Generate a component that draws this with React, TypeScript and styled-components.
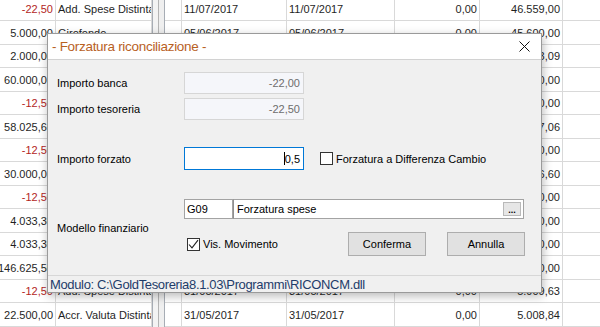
import React from 'react';
import styled, { createGlobalStyle } from 'styled-components';

const GlobalStyle = createGlobalStyle`
  html,
  body {
    margin: 0;
    padding: 0;
    background: #ffffff;
  }
`;

const Page = styled.div`
  position: relative;
  width: 600px;
  height: 327px;
  overflow: hidden;
  background: #ffffff;
  font-family: 'Liberation Sans', Arial, sans-serif;
  color: #1a1a1a;
`;

/* background grid */

const Grid = styled.div`
  margin-top: -2px;
`;

const GridRow = styled.div<{ $h: number }>`
  display: grid;
  grid-template-columns: 56px 96px 13px 17px 105px 108px 85px 83px 1fr;
  height: ${(p) => p.$h}px;
`;

const Cell = styled.div<{ $right?: boolean; $neg?: boolean; $last?: boolean }>`
  box-sizing: border-box;
  display: flex;
  align-items: center;
  justify-content: ${(p) => (p.$right ? 'flex-end' : 'flex-start')};
  padding: 0 ${(p) => (p.$right ? '2px' : '3px')} 0 ${(p) => (p.$right ? '0' : '2px')};
  border-bottom: 1px solid #d9d9d9;
  border-right: ${(p) => (p.$last ? 'none' : '1px solid #d9d9d9')};
  font-size: 11px;
  white-space: nowrap;
  overflow: hidden;
  color: ${(p) => (p.$neg ? '#b3261e' : '#1f1f1f')};
`;

const Splitter = styled.div`
  box-sizing: border-box;
  border-left: 1px solid #a7adb5;
  border-right: 1px solid #a7adb5;
  background: linear-gradient(
    to right,
    #f3f3f3 0 5px,
    #b4b4b4 5px 6px,
    #efefef 6px
  );
`;

/* dialog */

const Dialog = styled.div`
  position: absolute;
  left: 47px;
  top: 33px;
  width: 495px;
  height: 260px;
  box-sizing: border-box;
  display: flex;
  flex-direction: column;
  background: #f0f0f0;
  border: 1px solid #9a9a9a;
  box-shadow: 1px 3px 9px rgba(0, 0, 0, 0.28);
`;

const TitleBar = styled.div`
  display: flex;
  align-items: center;
  justify-content: space-between;
  height: 25px;
  background: #ffffff;
  border-bottom: 1px solid #d2d2d2;
  padding-left: 4px;
`;

const Title = styled.span`
  font-size: 13.5px;
  letter-spacing: -0.3px;
  color: #b8611f;
`;

const CloseButton = styled.span`
  display: flex;
  align-items: center;
  justify-content: center;
  width: 33px;
  height: 25px;
`;

const Body = styled.div`
  flex: 1;
  display: flex;
  flex-direction: column;
  padding: 12px 17px 0 9px;
  font-size: 11px;
  color: #000000;
`;

const Field = styled.div<{ $top: number }>`
  display: flex;
  align-items: center;
  margin-top: ${(p) => p.$top}px;
`;

const Label = styled.span`
  width: 127px;
  flex-shrink: 0;
`;

const AmountBox = styled.div<{ $active?: boolean; $h: number }>`
  box-sizing: border-box;
  width: 120px;
  height: ${(p) => p.$h}px;
  display: flex;
  align-items: center;
  justify-content: flex-end;
  padding-right: 3px;
  background: ${(p) => (p.$active ? '#ffffff' : '#f5f6fa')};
  border: 1px solid ${(p) => (p.$active ? '#0078d7' : '#d6d6d6')};
  color: ${(p) => (p.$active ? '#000000' : '#6d6d6d')};
`;

const Caret = styled.span`
  display: inline-block;
  width: 1px;
  height: 13px;
  background: #000000;
`;

const CheckRow = styled.label<{ $left: number }>`
  display: flex;
  align-items: center;
  gap: 3px;
  margin-left: ${(p) => p.$left}px;
`;

const Box = styled.span`
  box-sizing: border-box;
  width: 13px;
  height: 13px;
  display: flex;
  align-items: center;
  justify-content: center;
  background: #ffffff;
  border: 1px solid #333333;
`;

const Group = styled.div`
  display: flex;
  align-items: center;
  margin-top: 29px;
`;

const GroupColumn = styled.div`
  flex: 1;
  display: flex;
  flex-direction: column;
`;

const Lookup = styled.div`
  display: flex;
  height: 20px;
`;

const CodeBox = styled.div`
  box-sizing: border-box;
  width: 49px;
  display: flex;
  align-items: center;
  padding-left: 2px;
  background: #ffffff;
  border: 1px solid #a3a3a3;
`;

const DescBox = styled.div`
  box-sizing: border-box;
  flex: 1;
  display: flex;
  align-items: center;
  justify-content: space-between;
  padding: 0 2px 0 3px;
  background: #ffffff;
  border: 1px solid #a3a3a3;
  border-left: 1px solid #8f8f8f;
`;

const Ellipsis = styled.span`
  box-sizing: border-box;
  width: 18px;
  height: 14px;
  display: flex;
  align-items: flex-end;
  justify-content: center;
  font-size: 9px;
  font-weight: bold;
  line-height: 10px;
  background: #e6e6e6;
  border: 1px solid #b9b9b9;
`;

const Actions = styled.div`
  display: flex;
  align-items: center;
  margin-top: 13px;
`;

const Buttons = styled.div`
  display: flex;
  gap: 21px;
  margin-left: auto;
  margin-right: -1px;
`;

const Button = styled.button`
  box-sizing: border-box;
  width: 78px;
  height: 24px;
  padding: 0;
  font-family: 'Liberation Sans', Arial, sans-serif;
  font-size: 11px;
  color: #000000;
  background: #e1e1e1;
  border: 1px solid #adadad;
`;

const StatusBar = styled.div`
  height: 16px;
  display: flex;
  align-items: center;
  padding-left: 2px;
  border-top: 1px solid #d7d7d7;
  font-size: 13px;
  letter-spacing: -0.35px;
  color: #1e3c6a;
`;

type Line = [string, string, string, string, string, string];

const rows: Line[] = [
  ['-22,50', 'Add. Spese Distinta', '11/07/2017', '11/07/2017', '0,00', '46.559,00'],
  ['5.000,00', 'Girofondo', '05/06/2017', '05/06/2017', '0,00', '45.600,00'],
  ['2.000,00', 'Girofondo', '05/06/2017', '05/06/2017', '0,00', '40.603,09'],
  ['60.000,00', 'Girofondo', '02/06/2017', '02/06/2017', '0,00', '38.600,00'],
  ['-12,50', 'Add. Spese Distinta', '01/06/2017', '01/06/2017', '0,00', '21.400,00'],
  ['58.025,60', 'Accr. Valuta Distinta', '01/06/2017', '01/06/2017', '0,00', '21.387,06'],
  ['-12,50', 'Add. Spese Distinta', '01/06/2017', '01/06/2017', '0,00', '36.640,00'],
  ['30.000,00', 'Girofondo', '01/06/2017', '01/06/2017', '0,00', '36.626,60'],
  ['-12,50', 'Add. Spese Distinta', '01/06/2017', '01/06/2017', '0,00', '6.640,00'],
  ['4.033,30', 'Accr. Valuta Distinta', '31/05/2017', '31/05/2017', '0,00', '6.630,00'],
  ['4.033,30', 'Accr. Valuta Distinta', '31/05/2017', '31/05/2017', '0,00', '2.600,00'],
  ['146.625,50', 'Girofondo', '31/05/2017', '31/05/2017', '0,00', '1.430,00'],
  ['-12,50', 'Add. Spese Distinta', '31/05/2017', '31/05/2017', '0,00', '5.909,63'],
  ['22.500,00', 'Accr. Valuta Distinta', '31/05/2017', '31/05/2017', '0,00', '5.008,84'],
];

function CheckMark() {
  return (
    <svg width="11" height="11" viewBox="0 0 11 11">
      <polyline
        points="1,5.5 4,8.8 10,1.2"
        fill="none"
        stroke="#222222"
        strokeWidth="1.1"
      />
    </svg>
  );
}

export default function App(): JSX.Element {
  return (
    <Page>
      <GlobalStyle />
      <Grid>
        {rows.map((r, i) => (
          <GridRow key={i} $h={i % 2 === 0 ? 23 : 24}>
            <Cell $right $neg={r[0].startsWith('-')}>
              {r[0]}
            </Cell>
            <Cell>{r[1]}</Cell>
            <Splitter />
            <Cell />
            <Cell>{r[2]}</Cell>
            <Cell>{r[3]}</Cell>
            <Cell $right>{r[4]}</Cell>
            <Cell $right>{r[5]}</Cell>
            <Cell $last />
          </GridRow>
        ))}
      </Grid>

      <Dialog>
        <TitleBar>
          <Title>- Forzatura riconciliazione -</Title>
          <CloseButton>
            <svg width="11" height="11" viewBox="0 0 11 11">
              <path d="M0.5 0.5 L10.5 10.5 M10.5 0.5 L0.5 10.5" stroke="#111111" strokeWidth="1" />
            </svg>
          </CloseButton>
        </TitleBar>

        <Body>
          <Field $top={0}>
            <Label>Importo banca</Label>
            <AmountBox $h={22}>-22,00</AmountBox>
          </Field>
          <Field $top={4}>
            <Label>Importo tesoreria</Label>
            <AmountBox $h={22}>-22,50</AmountBox>
          </Field>
          <Field $top={27}>
            <Label>Importo forzato</Label>
            <AmountBox $active $h={23}>
              <Caret />
              0,5
            </AmountBox>
            <CheckRow $left={16}>
              <Box />
              Forzatura a Differenza Cambio
            </CheckRow>
          </Field>
          <Group>
            <Label>Modello finanziario</Label>
            <GroupColumn>
              <Lookup>
                <CodeBox>G09</CodeBox>
                <DescBox>
                  Forzatura spese
                  <Ellipsis>...</Ellipsis>
                </DescBox>
              </Lookup>
              <Actions>
                <CheckRow $left={3}>
                  <Box>
                    <CheckMark />
                  </Box>
                  Vis. Movimento
                </CheckRow>
                <Buttons>
                  <Button>Conferma</Button>
                  <Button>Annulla</Button>
                </Buttons>
              </Actions>
            </GroupColumn>
          </Group>
        </Body>

        <StatusBar>Modulo: C:\GoldTesoreria8.1.03\Programmi\RICONCM.dll</StatusBar>
      </Dialog>
    </Page>
  );
}
